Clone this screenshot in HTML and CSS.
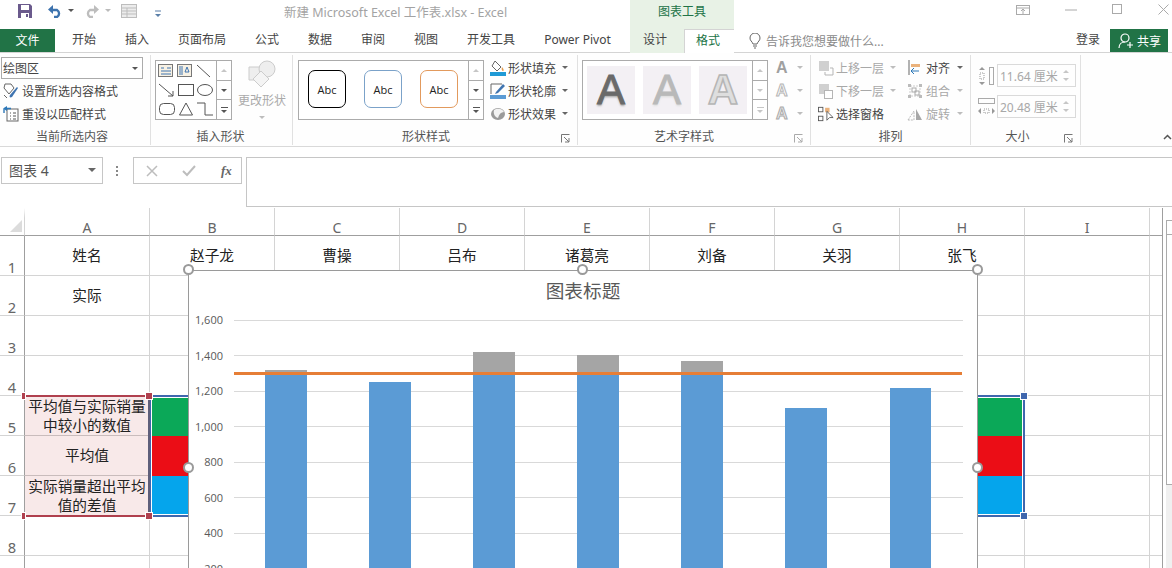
FILE: index.html
```html
<!DOCTYPE html>
<html lang="zh-CN">
<head>
<meta charset="utf-8">
<title>新建 Microsoft Excel 工作表.xlsx - Excel</title>
<link rel="stylesheet" href="styles.css">
</head>
<body>
<div class="app">
  <header class="titlebar">
    <div class="title-main">
      <div class="qat">
        <svg class="q-save" width="16" height="16" viewBox="0 0 16 16"><path d="M1 1h12l2 2v12H1z" fill="#6a5a8c"/><rect x="4" y="2" width="8" height="5" fill="#fff"/><rect x="4" y="10" width="8" height="5" fill="#fff"/><rect x="9" y="11" width="2" height="3" fill="#6a5a8c"/></svg>
        <svg class="q-undo" width="16" height="14" viewBox="0 0 16 14"><path d="M4 6h6a4 4 0 0 1 0 7H7" fill="none" stroke="#3d73ae" stroke-width="2.4"/><path d="M6 1v9L1 5.500z" fill="#3d73ae"/></svg>
        <span class="q-arrow"></span>
        <svg class="q-redo" width="16" height="14" viewBox="0 0 16 14"><path d="M12 6H6a4 4 0 0 0 0 7h3" fill="none" stroke="#bdbdbd" stroke-width="2.4"/><path d="M10 1v9l5-4.500z" fill="#bdbdbd"/></svg>
        <span class="q-arrow q-arrow-off"></span>
        <svg class="q-table" width="16" height="14" viewBox="0 0 16 14"><rect x=".5" y=".5" width="15" height="13" fill="#ececec" stroke="#bdbdbd"/><path d="M1 4h14M1 7h14M1 10h14M6 4v10" stroke="#bdbdbd"/></svg>
        <svg class="q-more" width="8" height="8" viewBox="0 0 8 8"><path d="M1 1h6" stroke="#5a7fa8"/><path d="M1 4h6l-3 3z" fill="#5a7fa8"/></svg>
      </div>
      <div class="doc-title">新建 Microsoft Excel 工作表.xlsx - Excel</div>
    </div>
    <div class="tools-title">图表工具</div>
    <div class="winbtns">
      <svg width="14" height="10" viewBox="0 0 14 10"><rect x=".5" y=".5" width="13" height="9" fill="none" stroke="#aaa"/><path d="M1 3h12M7 4v5M5 6l2-2 2 2" fill="none" stroke="#aaa"/></svg>
      <svg class="w-min" width="12" height="2" viewBox="0 0 12 2"><path d="M0 1h12" stroke="#aaa"/></svg>
      <svg class="w-max" width="10" height="10" viewBox="0 0 10 10"><rect x=".5" y=".5" width="9" height="9" fill="none" stroke="#aaa"/></svg>
      <svg class="w-close" width="11" height="11" viewBox="0 0 11 11"><path d="M.5.500l10 10M10.500.500l-10 10" stroke="#aaa"/></svg>
    </div>
  </header>

  <nav class="tabs">
    <div class="tab-file">文件</div>
    <div class="tab-list">
      <span>开始</span><span>插入</span><span>页面布局</span><span>公式</span><span>数据</span><span>审阅</span><span>视图</span><span>开发工具</span><span>Power Pivot</span>
    </div>
    <div class="tab-tools">
      <span class="tool-tab">设计</span>
      <span class="tool-tab tool-active">格式</span>
    </div>
    <div class="tellme">
      <svg width="12" height="16" viewBox="0 0 12 16"><path d="M4 11C3 8 1 8 1 5a5 5 0 0 1 10 0c0 3-2 3-3 6z" fill="none" stroke="#666"/><path d="M4 13h4M5 15h2" stroke="#666"/></svg>
      <span>告诉我您想要做什么...</span>
    </div>
    <div class="login">登录</div>
    <div class="share">
      <svg width="16" height="16" viewBox="0 0 16 16"><circle cx="7" cy="5" r="4" fill="none" stroke="#fff" stroke-width="1.200"/><path d="M1 15c0-4 3-6 6-6M12 9v6M9 12h6" fill="none" stroke="#fff" stroke-width="1.200"/></svg>
      <span>共享</span>
    </div>
  </nav>

  <section class="ribbon">
    <div class="group g1">
      <div class="body body-col">
        <div class="combo"><span>绘图区</span><i class="tri"></i></div>
        <div class="cmd cmd-first">
          <svg width="17" height="16" viewBox="0 0 17 16"><path d="M3 1h6l3 4-5 6-5-6z" fill="#fff" stroke="#666"/><path d="M8 12l7-8 1 1-6 9c-2 1-3 0-2-2z" fill="#3f74b0"/><path d="M2 12l3 3" stroke="#666"/></svg>
          <span>设置所选内容格式</span>
        </div>
        <div class="cmd">
          <svg width="17" height="16" viewBox="0 0 17 16"><rect x="5" y="3" width="11" height="12" fill="#fff" stroke="#666"/><path d="M8 7h1M11 7h3M8 10h1M11 10h3M8 13h1M11 13h3" stroke="#555"/><path d="M9 2.500H4" stroke="#2d78b8" stroke-width="1.600"/><path d="M5 0v5L1 2.500z" fill="#2d78b8"/><path d="M2 3v4" stroke="#2d78b8" stroke-width="1.400"/></svg>
          <span>重设以匹配样式</span>
        </div>
      </div>
      <div class="glabel">当前所选内容</div>
    </div>

    <div class="group g2">
      <div class="body">
        <div class="gallery">
          <div class="shape-grid">
            <svg width="18" height="14" viewBox="0 0 18 14"><rect x=".5" y=".5" width="14" height="12" fill="#f7f1e4" stroke="#777"/><path d="M3 4h3M9 4h4M3 7h10M3 10h10" stroke="#3f74b0"/></svg>
            <svg width="18" height="14" viewBox="0 0 18 14"><rect x=".5" y=".5" width="14" height="12" fill="#f7f1e4" stroke="#777"/><path d="M3 2v9M5 2v9M8 8h4M10 3l-2 5M10 3l2 5" stroke="#3f74b0" fill="none"/></svg>
            <svg width="18" height="14" viewBox="0 0 18 14"><path d="M1 1l13 12" stroke="#555"/></svg>
            <svg width="18" height="14" viewBox="0 0 18 14"><path d="M1 1l14 12M15 8v5h-5" fill="none" stroke="#555"/></svg>
            <svg width="18" height="14" viewBox="0 0 18 14"><rect x="1.500" y="1.500" width="15" height="11" fill="none" stroke="#555"/></svg>
            <svg width="18" height="14" viewBox="0 0 18 14"><ellipse cx="9" cy="7" rx="7.500" ry="5.500" fill="none" stroke="#555"/></svg>
            <svg width="18" height="14" viewBox="0 0 18 14"><rect x="1.500" y="1.500" width="15" height="11" rx="4" fill="none" stroke="#555"/></svg>
            <svg width="18" height="14" viewBox="0 0 18 14"><path d="M9 1l6.500 12h-13z" fill="none" stroke="#555"/></svg>
            <svg width="18" height="14" viewBox="0 0 18 14"><path d="M1 1h8v12h8" fill="none" stroke="#555"/></svg>
          </div>
          <div class="gscroll">
            <span><b class="up off"></b></span><span><b class="down"></b></span><span><b class="more"></b></span>
          </div>
        </div>
        <div class="bigbtn">
          <svg width="30" height="30" viewBox="0 0 30 30"><path d="M2 8h14v13H2z" fill="#eee" stroke="#ccc"/><circle cx="20" cy="10" r="8" fill="#eee" stroke="#ccc"/><path d="M14 12l8 8-8 8-8-8z" fill="#f4f4f4" stroke="#ccc"/></svg>
          <span>更改形状</span>
          <i class="tri tri-off"></i>
        </div>
      </div>
      <div class="glabel">插入形状</div>
    </div>

    <div class="group g3">
      <div class="body">
        <div class="gallery gallery-wide">
          <div class="abc-list">
            <span class="abc abc-k">Abc</span><span class="abc abc-b">Abc</span><span class="abc abc-o">Abc</span>
          </div>
          <div class="gscroll">
            <span><b class="up off"></b></span><span><b class="down"></b></span><span><b class="more"></b></span>
          </div>
        </div>
        <div class="cmd-col">
          <div class="cmd cmd-tall">
            <svg width="16" height="16" viewBox="0 0 16 16"><path d="M5 1l6 6-4 4-5-5z" fill="#fff" stroke="#666"/><path d="M12 7c2 2 2 4 1 4s-2-2-1-4z" fill="#e69a4a"/><rect y="12" width="16" height="4" fill="#1f9ad6"/></svg>
            <span>形状填充</span><i class="tri tri-s"></i>
          </div>
          <div class="cmd cmd-tall">
            <svg width="16" height="16" viewBox="0 0 16 16"><path d="M1 1h11M1 1v10" stroke="#666" fill="none"/><path d="M6 9l7-8 2 2-7 7-3 1z" fill="#3f74b0"/><rect y="12" width="16" height="4" fill="#5b9bd5"/></svg>
            <span>形状轮廓</span><i class="tri tri-s"></i>
          </div>
          <div class="cmd cmd-tall">
            <svg width="16" height="16" viewBox="0 0 16 16"><ellipse cx="8" cy="8" rx="7" ry="6" fill="#9a9a9a"/><path d="M4 4c3-2 8-2 10 2-3 0-5 2-6 6-3-1-5-4-4-8z" fill="#f2f2f2"/></svg>
            <span>形状效果</span><i class="tri tri-s"></i>
          </div>
        </div>
      </div>
      <div class="glabel"><span>形状样式</span><svg class="launch" width="9" height="9" viewBox="0 0 9 9"><path d="M.5 8.500v-8h8M3 3l5 5M8 4v4H4" fill="none" stroke="#777"/></svg></div>
    </div>

    <div class="group g4">
      <div class="body">
        <div class="gallery gallery-wide">
          <div class="art-list">
            <span class="art art-1">A</span><span class="art art-2">A</span><span class="art art-3">A</span>
          </div>
          <div class="gscroll">
            <span><b class="up off"></b></span><span><b class="down off"></b></span><span><b class="more off"></b></span>
          </div>
        </div>
        <div class="art-side">
          <div class="side-row"><span class="a-fill">A</span><i class="tri tri-s tri-off"></i></div>
          <div class="side-row"><span class="a-line">A</span><i class="tri tri-s tri-off"></i></div>
          <div class="side-row"><span class="a-fx">A</span><i class="tri tri-s tri-off"></i></div>
        </div>
      </div>
      <div class="glabel"><span>艺术字样式</span><svg class="launch launch-off" width="9" height="9" viewBox="0 0 9 9"><path d="M.5 8.500v-8h8M3 3l5 5M8 4v4H4" fill="none" stroke="#aaa"/></svg></div>
    </div>

    <div class="group g5">
      <div class="body">
        <div class="cmd-col arrange-a">
          <div class="cmd cmd-tall off">
            <svg width="16" height="16" viewBox="0 0 16 16"><rect x="1" y="1" width="10" height="10" fill="#d0d0d0"/><path d="M12 8h3v7H7v-3" fill="none" stroke="#b5b5b5"/></svg>
            <span>上移一层</span><i class="tri tri-s tri-off"></i>
          </div>
          <div class="cmd cmd-tall off">
            <svg width="16" height="16" viewBox="0 0 16 16"><rect x="1" y="1" width="10" height="10" fill="#d0d0d0"/><rect x="6.500" y="7.500" width="8" height="8" fill="#fff" stroke="#b5b5b5"/></svg>
            <span>下移一层</span><i class="tri tri-s tri-off"></i>
          </div>
          <div class="cmd cmd-tall">
            <svg width="16" height="16" viewBox="0 0 18 16"><rect x=".5" y=".5" width="5" height="5" fill="none" stroke="#555"/><rect x=".5" y="10.500" width="5" height="5" fill="none" stroke="#555"/><rect x="8" y="1" width="5" height="5" fill="#eab27c"/><path d="M10 5v10l3-3h4z" fill="#fff" stroke="#555"/></svg>
            <span>选择窗格</span>
          </div>
        </div>
        <div class="cmd-col arrange-b">
          <div class="cmd cmd-tall">
            <svg width="16" height="16" viewBox="-1 0 16 16"><path d="M1 0v15" stroke="#666"/><rect x="3" y="4" width="9" height="3" fill="#eab27c"/><path d="M3 11h8M3 11l3-3M3 11l3 3" fill="none" stroke="#2d78b8"/></svg>
            <span>对齐</span><i class="tri tri-s"></i>
          </div>
          <div class="cmd cmd-tall off">
            <svg width="16" height="16" viewBox="0 0 16 16"><path d="M3 3h10v10H3z" fill="none" stroke="#ccc" stroke-dasharray="2 1"/><rect x="5" y="5" width="4" height="4" fill="none" stroke="#aaa"/><rect x="8" y="8" width="4" height="4" fill="none" stroke="#aaa"/><path d="M1 1h3v3H1zM12 1h3v3h-3zM1 12h3v3H1zM12 12h3v3h-3z" fill="#bbb"/></svg>
            <span>组合</span><i class="tri tri-s tri-off"></i>
          </div>
          <div class="cmd cmd-tall off">
            <svg width="16" height="16" viewBox="0 0 16 16"><path d="M1 14l6-9v9z" fill="none" stroke="#bbb" stroke-dasharray="2 1"/><path d="M9 14V3l6 11z" fill="#a8a8a8"/></svg>
            <span>旋转</span><i class="tri tri-s tri-off"></i>
          </div>
        </div>
      </div>
      <div class="glabel">排列</div>
    </div>

    <div class="group g6">
      <div class="body body-col size-col">
        <div class="size-row">
          <svg width="17" height="20" viewBox="0 0 17 20"><path d="M4 1L1 4h6zM4 19l-3-3h6z" fill="#999"/><rect x="2" y="7" width="4" height="6" fill="none" stroke="#999" stroke-dasharray="1 1"/><rect x="11.500" y="1.500" width="4" height="17" fill="none" stroke="#aaa"/></svg>
          <div class="spin"><span>11.64 厘米</span><em><b class="up off"></b><b class="down off"></b></em></div>
        </div>
        <div class="size-row">
          <svg width="17" height="20" viewBox="0 0 17 20"><rect x=".5" y="1.500" width="16" height="5" fill="none" stroke="#aaa"/><path d="M0 14l3-3v6zM17 14l-3-3v6z" fill="#999"/><rect x="6" y="12" width="5" height="4" fill="none" stroke="#999" stroke-dasharray="1 1"/></svg>
          <div class="spin"><span>20.48 厘米</span><em><b class="up off"></b><b class="down off"></b></em></div>
        </div>
      </div>
      <div class="glabel"><span>大小</span><svg class="launch" width="9" height="9" viewBox="0 0 9 9"><path d="M.5 8.500v-8h8M3 3l5 5M8 4v4H4" fill="none" stroke="#777"/></svg></div>
    </div>
    <svg class="collapse" width="9" height="6" viewBox="0 0 9 6"><path d="M1 5l3.500-3.500L8 5" fill="none" stroke="#555" stroke-width="1.500"/></svg>
  </section>

  <section class="formula">
    <div class="namebox"><span>图表 4</span><i class="tri tri-name"></i></div>
    <div class="grip"></div>
    <div class="fx-btns">
      <svg width="12" height="12" viewBox="0 0 12 12"><path d="M1 1l10 10M11 1L1 11" stroke="#bdbdbd" stroke-width="1.500"/></svg>
      <svg width="14" height="12" viewBox="0 0 14 12"><path d="M1 6l4 4 8-9" fill="none" stroke="#bdbdbd" stroke-width="2"/></svg>
      <span class="fx">fx</span>
    </div>
    <div class="fx-input"></div>
  </section>

  <section class="sheet-wrap">
    <div class="sheet">
      <div class="c corner"><svg width="12" height="12" viewBox="0 0 12 12"><path d="M12 0v12H0z" fill="#dcdcdc"/></svg></div>
      <div class="c ch">A</div><div class="c ch">B</div><div class="c ch">C</div><div class="c ch">D</div><div class="c ch">E</div><div class="c ch">F</div><div class="c ch">G</div><div class="c ch">H</div><div class="c ch">I</div><div class="c ch ch-end"></div>

      <div class="c rh">1</div><div class="c">姓名</div><div class="c">赵子龙</div><div class="c">曹操</div><div class="c">吕布</div><div class="c">诸葛亮</div><div class="c">刘备</div><div class="c">关羽</div><div class="c">张飞</div><div class="c"></div><div class="c end"></div>
      <div class="c rh">2</div><div class="c">实际</div><div class="c"></div><div class="c"></div><div class="c"></div><div class="c"></div><div class="c"></div><div class="c"></div><div class="c"></div><div class="c"></div><div class="c end"></div>
      <div class="c rh">3</div><div class="c"></div><div class="c"></div><div class="c"></div><div class="c"></div><div class="c"></div><div class="c"></div><div class="c"></div><div class="c"></div><div class="c"></div><div class="c end"></div>
      <div class="c rh">4</div><div class="c"></div><div class="c"></div><div class="c"></div><div class="c"></div><div class="c"></div><div class="c"></div><div class="c"></div><div class="c"></div><div class="c"></div><div class="c end"></div>
      <div class="c rh">5</div><div class="c pink">平均值与实际销量中较小的数值</div><div class="c green"></div><div class="c green"></div><div class="c green"></div><div class="c green"></div><div class="c green"></div><div class="c green"></div><div class="c green"></div><div class="c"></div><div class="c end"></div>
      <div class="c rh">6</div><div class="c pink">平均值</div><div class="c red"></div><div class="c red"></div><div class="c red"></div><div class="c red"></div><div class="c red"></div><div class="c red"></div><div class="c red"></div><div class="c"></div><div class="c end"></div>
      <div class="c rh">7</div><div class="c pink">实际销量超出平均值的差值</div><div class="c blue"></div><div class="c blue"></div><div class="c blue"></div><div class="c blue"></div><div class="c blue"></div><div class="c blue"></div><div class="c blue"></div><div class="c"></div><div class="c end"></div>
      <div class="c rh">8</div><div class="c"></div><div class="c"></div><div class="c"></div><div class="c"></div><div class="c"></div><div class="c"></div><div class="c"></div><div class="c"></div><div class="c"></div><div class="c end"></div>
      <div class="c rh"></div><div class="c"></div><div class="c"></div><div class="c"></div><div class="c"></div><div class="c"></div><div class="c"></div><div class="c"></div><div class="c"></div><div class="c"></div><div class="c end"></div>

      <div class="sel-blue"><i class="h-b h-tr"></i><i class="h-b h-br"></i></div>
      <div class="sel-red"><i class="h-r h-tl"></i><i class="h-r h-tr"></i><i class="h-r h-bl"></i><i class="h-r h-br"></i></div>

      <div class="chart">
        <svg class="plot" width="790" height="298" viewBox="188 270 790 298">
          <text class="ct" x="583" y="298" text-anchor="middle">图表标题</text>
          <g class="gl">
            <path d="M234 320.500H963M234 355.500H963M234 391.500H963M234 426.500H963M234 462.500H963M234 497.500H963M234 533.500H963M234 568.500H963"/>
          </g>
          <g class="ax" text-anchor="end">
            <text x="223" y="324">1,600</text><text x="223" y="360">1,400</text><text x="223" y="395">1,200</text><text x="223" y="431">1,000</text><text x="223" y="466">800</text><text x="223" y="502">600</text><text x="223" y="537">400</text><text x="223" y="573">200</text>
          </g>
          <g class="bar-g">
            <rect x="265" y="370" width="42" height="10"/><rect x="473" y="352" width="42" height="30"/><rect x="577" y="355" width="42" height="30"/><rect x="681" y="361" width="42" height="24"/>
          </g>
          <g class="bar-b">
            <rect x="265" y="375" width="42" height="200"/><rect x="369" y="382" width="42" height="200"/><rect x="473" y="375" width="42" height="200"/><rect x="577" y="375" width="42" height="200"/><rect x="681" y="375" width="42" height="200"/><rect x="785" y="408" width="42" height="200"/><rect x="890" y="388" width="41" height="200"/>
          </g>
          <path class="avg" d="M234 373.500H962"/>
        </svg>
        <i class="hd hd-tl"></i><i class="hd hd-tc"></i><i class="hd hd-tr"></i><i class="hd hd-ml"></i><i class="hd hd-mr"></i>
      </div>
    </div>
    <div class="vcol"><div class="vscroll"><span></span></div></div>
  </section>
</div>
</body>
</html>
```
FILE: styles.css
```css
* { box-sizing: border-box; }
html, body { margin: 0; padding: 0; background: #fff; }
body { font-family: "Noto Sans", "Noto Sans CJK SC", sans-serif; color: #444; font-size: 12px; }
.app { width: 1172px; height: 568px; overflow: hidden; display: flex; flex-direction: column; background: #fff; }
svg { display: block; flex: none; }
i, b, em { display: block; font-style: normal; }

/* title bar */
.titlebar { display: grid; grid-template-columns: 630px 104px 1fr; height: 29px; flex: none; }
.title-main { display: flex; align-items: center; }
.qat { display: flex; align-items: center; width: 284px; padding-left: 17px; height: 100%; padding-bottom: 8px; }
.q-undo { margin-left: 14px; }
.q-arrow { width: 0; height: 0; border: 3px solid transparent; border-top: 3px solid #555; border-bottom: 0; margin-left: 5px; }
.q-arrow-off { border-top-color: #bbb; }
.q-redo { margin-left: 10px; }
.q-table { margin-left: 10px; }
.q-more { margin-left: 17px; margin-top: 6px; }
.doc-title { color: #a3a3a3; font-size: 12.500px; padding-bottom: 7px; white-space: nowrap; }
.tools-title { background: #e8f2e6; color: #217346; text-align: center; line-height: 24px; font-size: 12px; }
.winbtns { display: flex; align-items: flex-start; padding: 5px 0 0 282px; }
.w-min { margin: 4px 0 0 35px; }
.w-max { margin: -1px 0 0 35px; }
.w-close { margin: -1px 0 0 36px; }

/* tabs */
.tabs { display: flex; height: 24px; flex: none; border-bottom: 1px solid #d4d4d4; align-items: stretch; }
.tab-file { width: 55px; height: 23px; background: #217346; color: #fff; text-align: center; line-height: 23px; }
.tab-list { display: flex; gap: 29px; width: 575px; padding-left: 17px; line-height: 22px; white-space: nowrap; }
.tab-tools { display: flex; width: 104px; height: 24px; background: #e8f2e6; }
.tool-tab { width: 54px; padding-right: 4px; text-align: center; line-height: 22px; }
.tool-active { width: 50px; height: 24px; padding-right: 3px; background: #fff; color: #217346; border: 1px solid #d4d4d4; border-bottom: 0; border-right: 0; position: relative; z-index: 1; }
.tellme { display: flex; align-items: center; gap: 5px; width: 342px; padding-left: 15px; color: #8a8a8a; }
.login { width: 34px; line-height: 22px; }
.share { width: 58px; height: 23px; margin-left: 0; background: #217346; color: #fff; display: flex; align-items: center; gap: 3px; padding-left: 8px; }

/* ribbon */
.ribbon { display: flex; height: 94px; flex: none; border-bottom: 1px solid #d9d9d9; position: relative; background: #fefefe; }
.group { display: flex; flex-direction: column; height: 90px; margin-top: 2px; border-right: 1px solid #e1e1e1; }
.body { flex: 1; display: flex; }
.body-col { flex-direction: column; }
.glabel { height: 21px; padding-top: 2px; display: flex; align-items: center; justify-content: center; color: #555; position: relative; }
.launch { position: absolute; right: 7px; bottom: 2px; }
.g1 { width: 151px; padding: 0 7px 0 1px; }
.g2 { width: 142px; }
.g2 .glabel { padding-right: 2px; }
.g3 { width: 285px; }
.g4 { width: 233px; }
.g5 { width: 160px; }
.g6 { width: 110px; }
.g3 .glabel span { padding-right: 18px; }
.g4 .glabel span { padding-right: 20px; }
.g6 .glabel span { padding-right: 16px; }
.combo { height: 22px; margin-top: 2px; border: 1px solid #ababab; display: flex; align-items: center; justify-content: space-between; padding: 0 4px 0 1px; background: #fff; }
.tri { width: 0; height: 0; border: 3.500px solid transparent; border-top: 3.500px solid #555; border-bottom: 0; }
.tri-s { border-width: 3px; border-bottom-width: 0; margin-left: 4px; border-top-color: #666; }
.tri-off { border-top-color: #bdbdbd; }
.cmd { display: flex; align-items: center; height: 23px; gap: 3px; padding-left: 1px; white-space: nowrap; }
.cmd.off { color: #a8a8a8; }
.cmd-tall { height: 23px; padding-left: 0; }
.cmd-col { display: flex; flex-direction: column; padding-top: 1px; }

.gallery { display: flex; width: 77px; height: 60px; margin: 5px 0 0 4px; border: 1px solid #ababab; background: #fff; }
.gallery-wide { width: 186px; }
.shape-grid { width: 61px; display: grid; grid-template-columns: repeat(3, 1fr); align-items: center; justify-items: center; padding: 0 1px; }
.gscroll { width: 15px; margin-left: auto; border-left: 1px solid #ababab; display: flex; flex-direction: column; }
.gscroll span { flex: 1; display: flex; align-items: center; justify-content: center; border-bottom: 1px solid #ababab; }
.gscroll span:last-child { border-bottom: 0; }
.up { width: 0; height: 0; border: 3px solid transparent; border-bottom: 3px solid #555; border-top: 0; }
.down { width: 0; height: 0; border: 3px solid transparent; border-top: 3px solid #555; border-bottom: 0; }
.more { width: 7px; height: 6px; border-top: 1px solid #555; position: relative; }
.more::after { content: ""; position: absolute; left: .5px; top: 2px; border: 3px solid transparent; border-top: 3px solid #555; border-bottom: 0; }
.up.off { border-bottom-color: #c6c6c6; }
.down.off { border-top-color: #c6c6c6; }
.more.off { border-top-color: #c6c6c6; }
.more.off::after { border-top-color: #c6c6c6; }
.bigbtn { width: 60px; display: flex; flex-direction: column; align-items: center; color: #aaa; padding-top: 4px; }
.bigbtn span { margin-top: 3px; line-height: 17px; white-space: nowrap; }
.bigbtn .tri { margin-top: 7px; }

.g3 .gallery { margin-left: 5px; }
.abc-list { display: flex; gap: 18px; padding: 9px 0 0 9px; }
.abc { width: 38px; height: 38px; border-radius: 7px; border: 1.500px solid #000; display: flex; align-items: center; justify-content: center; font-size: 11px; font-family: "Open Sans", sans-serif; color: #222; }
.abc-b { border-color: #7ba2c9; }
.abc-o { border-color: #e29a5d; }
.g3 .cmd-col { margin-left: 6px; }
.g3 .cmd { gap: 2px; }

.g4 .gallery { margin-left: 4px; }
.art-list { display: flex; gap: 8px; padding: 5px 0 0 4px; }
.art { width: 48px; height: 48px; background: #f3f0f4; display: flex; align-items: center; justify-content: center; font: 42px/48px "Liberation Sans", sans-serif; }
.art-1 { color: #6a6a6a; -webkit-text-stroke: 1px #6a6a6a; text-shadow: 0 2px 2px #aaa; }
.art-2 { color: #b9b9b9; -webkit-text-stroke: 1px #b9b9b9; text-shadow: 0 2px 2px #ddd; }
.art-3 { color: #dedede; -webkit-text-stroke: 1.500px #b5b5b5; font-weight: bold; }
.art-side { display: flex; flex-direction: column; padding: 1px 0 0 8px; }
.side-row { height: 23px; display: flex; align-items: center; font: bold 16px "Liberation Sans", sans-serif; gap: 5px; }
.a-fill { color: #a0a0a0; }
.a-line { color: #fff; -webkit-text-stroke: 1px #b5b5b5; }
.a-fx { color: #eee; -webkit-text-stroke: 1px #aaa; }

.arrange-a { width: 98px; padding-left: 7px; }
.arrange-a .cmd { gap: 2px; }
.arrange-b .cmd { gap: 3px; margin-left: -2px; }

.size-col { padding: 9px 0 0 7px; gap: 8px; }
.size-row { display: flex; align-items: center; gap: 2px; }
.spin { width: 79px; height: 23px; border: 1px solid #dadada; display: flex; align-items: center; justify-content: space-between; padding: 0 6px 0 2px; color: #a8a8a8; font-size: 12px; white-space: nowrap; }
.spin em { display: flex; flex-direction: column; gap: 5px; }
.collapse { position: absolute; right: 0; bottom: 6px; }

/* formula bar */
.formula { height: 61px; flex: none; display: flex; align-items: flex-start; padding-top: 10px; padding-left: 1px; }
.namebox { width: 102px; height: 27px; border: 1px solid #c6c6c6; display: flex; align-items: center; justify-content: space-between; padding: 0 6px 2px 7px; font-size: 14px; color: #555; }
.tri-name { border-width: 4px; border-bottom-width: 0; border-top-color: #666; }
.grip { width: 2px; height: 11px; margin: 8px 15px 0 13px; background-image: radial-gradient(circle, #888 1px, transparent 1px); background-size: 2px 4px; }
.fx-btns { width: 109px; height: 27px; border: 1px solid #c6c6c6; display: flex; align-items: center; gap: 24px; padding-left: 12px; }
.fx { font: italic bold 13px "Liberation Serif", serif; color: #666; margin-left: 1px; }
.fx-input { flex: 1; height: 50px; margin-left: 4px; border: 1px solid #c6c6c6; border-right: 0; }

/* sheet */
.sheet-wrap { flex: 1; display: flex; gap: 4px; min-height: 0; }
.sheet { width: 1163px; height: 360px; position: relative; display: grid; grid-template-columns: 25px repeat(9, 125px) 13px; grid-template-rows: 28px repeat(9, 40px) 14px; border-right: 1px solid #9f9f9f; overflow: hidden; }
.c { border-right: 1px solid #d4d4d4; border-bottom: 1px solid #d4d4d4; display: flex; align-items: center; justify-content: center; font-size: 14.670px; color: #222; text-align: center; line-height: 19px; min-width: 0; }
.end { border-right: 0; }
.corner { border-right: 1px solid #d4d4d4; border-bottom: 1px solid #9f9f9f; align-items: flex-end; justify-content: flex-end; padding: 0 2px 3px 0; border-top: 10px solid #fff; }
.ch { border-bottom: 1px solid #9f9f9f; color: #666; padding: 12px 0 0; font-size: 14px; align-items: flex-end; line-height: 15px; background-image: linear-gradient(#fff 10px, transparent 10px); }
.ch-end { border-right: 0; }
.rh { border-right: 1px solid #9f9f9f; color: #666; align-items: flex-end; line-height: 16px; }
.pink { background: #f8e9e9; padding: 0 2px; border-bottom-color: #c9bcbc; }
.green { background: #0ba858; border: 0; }
.red { background: #eb0d16; border: 0; }
.blue { background: #05a5ec; border: 0; }

.sel-blue { position: absolute; left: 149px; top: 187px; width: 876px; height: 122px; border: 2px solid #3f67ae; box-shadow: inset 0 0 0 1px #fff; }
.sel-red { position: absolute; left: 25px; top: 187px; width: 125px; height: 122px; border-top: 2px solid #b0404e; border-bottom: 2px solid #b0404e; border-right: 2px solid #5f5f7a; }
.h-b, .h-r { position: absolute; width: 6px; height: 6px; }
.h-b { background: #3f67ae; outline: 1px solid #fff; }
.h-r { background: #b0404e; outline: 1px solid #fff; }
.h-tl { left: -3px; top: -4px; width: 3px; }
.h-bl { left: -3px; bottom: -4px; width: 3px; }
.h-tr { right: -4px; top: -4px; }
.h-br { right: -4px; bottom: -4px; }

.chart { position: absolute; left: 188px; top: 62px; width: 790px; height: 306px; background: #fff; border: 1.500px solid #9a9a9a; }
.plot { margin: -1.500px; }
.ct { font: 18.670px "Noto Sans CJK SC", sans-serif; fill: #595959; }
.gl path { stroke: #d9d9d9; stroke-width: 1; fill: none; }
.ax text { font: 11px "Open Sans", sans-serif; fill: #595959; }
.bar-g rect { fill: #a5a5a5; }
.bar-b rect { fill: #5b9bd5; }
.avg { stroke: #e67e36; stroke-width: 3; fill: none; }
.hd { position: absolute; width: 11px; height: 11px; border-radius: 50%; background: #fff; border: 2px solid #9a9a9a; }
.hd-tl { left: -6px; top: -7px; }
.hd-tc { left: 388px; top: -7px; }
.hd-tr { right: -6px; top: -7px; }
.hd-ml { left: -6px; top: 191px; }
.hd-mr { right: -6px; top: 191px; }

.vcol { flex: 1; margin-top: 12px; background: #f0f0f0; margin-left: -1px; }
.vscroll { height: 265px; background: #fff; border: 1px solid #ababab; border-right: 0; }
.vscroll span { display: block; height: 14px; border-bottom: 1px solid #ababab; }
```
